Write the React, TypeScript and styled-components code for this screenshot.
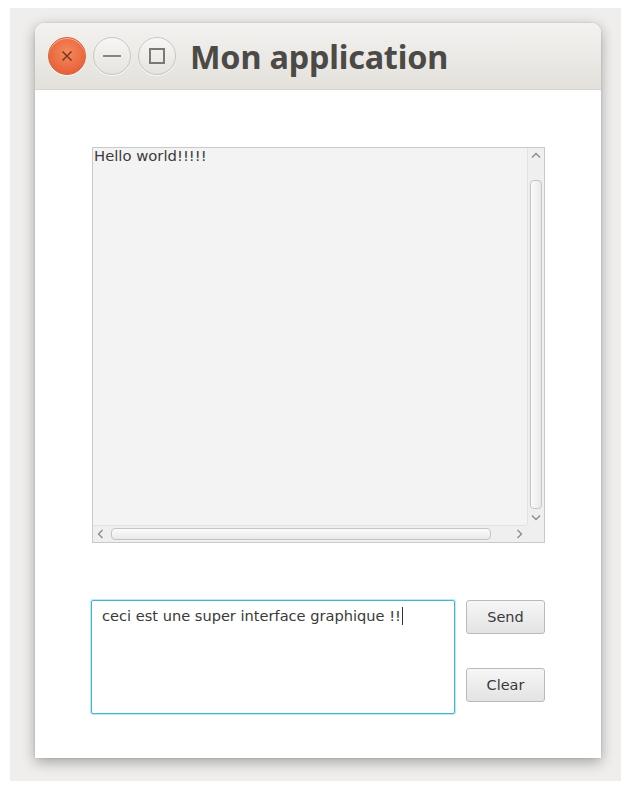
import * as React from 'react';
import styled, { createGlobalStyle } from 'styled-components';

const GlobalStyle = createGlobalStyle`
  html, body {
    margin: 0;
    padding: 0;
    background: #ffffff;
  }
  body {
    font-family: 'DejaVu Sans', 'Noto Sans', sans-serif;
  }
`;

const Desktop = styled.div`
  margin: 8px 10px 9px 10px;
  padding: 15px 20px 23px 25px;
  background: #efeeec;
`;

const Window = styled.div`
  width: 566px;
  height: 735px;
  display: flex;
  flex-direction: column;
  background: #ffffff;
  border-radius: 9px 9px 0 0;
  box-shadow: 0 4px 14px rgba(0, 0, 0, 0.32), 0 0 2px rgba(0, 0, 0, 0.15);
`;

const TitleBar = styled.header`
  height: 66px;
  display: flex;
  align-items: center;
  padding: 0 0 0 13px;
  gap: 7px;
  background: linear-gradient(#f3f2f0, #e4e1dc);
  border-bottom: 1px solid #d8d5d0;
  border-radius: 9px 9px 0 0;
`;

const WinButton = styled.div<{ $close?: boolean }>`
  width: 38px;
  height: 38px;
  border-radius: 50%;
  box-sizing: border-box;
  display: flex;
  align-items: center;
  justify-content: center;
  border: 1px solid ${(p) => (p.$close ? '#d9613a' : '#c9c6c1')};
  background: ${(p) =>
    p.$close
      ? 'radial-gradient(circle at 50% 40%, #f58a5e, #e8643a 70%, #dc5a31)'
      : 'linear-gradient(#f7f6f4, #e6e3df)'};
  box-shadow: 0 1px 1px rgba(255, 255, 255, 0.8), inset 0 1px 0 rgba(255, 255, 255, 0.5);
`;

const Title = styled.h1`
  margin: 0 0 0 7px;
  font-family: 'Noto Sans', 'Open Sans', sans-serif;
  font-weight: 700;
  font-size: 32.4px;
  color: #4b4a46;
  letter-spacing: -0.2px;
`;

const Body = styled.main`
  flex: 1;
  display: flex;
  flex-direction: column;
  justify-content: space-between;
  padding: 57px 56px 45px 57px;
`;

const Output = styled.div`
  width: 453px;
  height: 396px;
  box-sizing: border-box;
  border: 1px solid #c9c9c9;
  background: #f3f3f3;
  display: grid;
  grid-template-columns: 1fr 17px;
  grid-template-rows: 1fr 17px;
`;

const OutputText = styled.div`
  padding: 0 0 0 1px;
  font-size: 14.8px;
  line-height: 16px;
  color: #3a3a3a;
`;

const VTrack = styled.div`
  display: flex;
  flex-direction: column;
  align-items: center;
  border-left: 1px solid #e2e2e2;
  background: #efefef;
`;

const HTrack = styled.div`
  display: flex;
  align-items: center;
  border-top: 1px solid #e2e2e2;
  background: #efefef;
`;

const Corner = styled.div`
  background: #efefef;
`;

const Arrow = styled.div`
  width: 16px;
  height: 16px;
  display: flex;
  align-items: center;
  justify-content: center;
  flex-shrink: 0;
`;

const VThumb = styled.div`
  width: 12px;
  flex: 1;
  margin: 16px 0 0;
  box-sizing: border-box;
  border: 1px solid #c4c4c4;
  border-radius: 4px;
  background: linear-gradient(90deg, #fbfbfb, #e9e9e9);
`;

const HThumb = styled.div`
  height: 12px;
  width: 380px;
  margin-left: 2px;
  box-sizing: border-box;
  border: 1px solid #c4c4c4;
  border-radius: 4px;
  background: linear-gradient(#fbfbfb, #e9e9e9);
`;

const Spacer = styled.div`
  flex: 1;
`;

const Composer = styled.div`
  display: flex;
  gap: 11px;
  margin-left: -1px;
  margin-bottom: -1px;
`;

const Input = styled.div`
  width: 364px;
  height: 114px;
  box-sizing: border-box;
  border: 1px solid #3fb6d9;
  border-radius: 2px;
  box-shadow: 0 0 0 1px rgba(120, 205, 230, 0.45);
  padding: 6px 10px;
  font-size: 14.6px;
  line-height: 18px;
  color: #3a3a3a;
`;

const Caret = styled.span`
  display: inline-block;
  width: 1px;
  height: 18px;
  margin-left: 1px;
  vertical-align: -4px;
  background: #333;
`;

const Buttons = styled.div`
  display: flex;
  flex-direction: column;
  gap: 34px;
`;

const Button = styled.button`
  width: 79px;
  height: 34px;
  box-sizing: border-box;
  border: 1px solid #bababa;
  border-radius: 3px;
  background: linear-gradient(#f6f6f6, #e3e3e3);
  font-family: 'DejaVu Sans', sans-serif;
  font-size: 14.5px;
  color: #3a3a3a;
  padding: 0;
`;

const Chevron: React.FC<{ dir: 'up' | 'down' | 'left' | 'right' }> = ({ dir }) => {
  const d = {
    up: 'M4 9.5 L8 5.5 L12 9.5',
    down: 'M4 6.5 L8 10.5 L12 6.5',
    left: 'M9.5 4 L5.5 8 L9.5 12',
    right: 'M6.5 4 L10.5 8 L6.5 12',
  }[dir];
  return (
    <svg width="16" height="16" viewBox="0 0 16 16">
      <path d={d} fill="none" stroke="#8a8a8a" strokeWidth="1.3" />
    </svg>
  );
};

const App: React.FC = () => {
  return (
    <>
      <GlobalStyle />
      <Desktop>
        <Window>
          <TitleBar>
            <WinButton $close>
              <svg width="16" height="16" viewBox="0 0 16 16">
                <path d="M3.5 3.5 L12.5 12.5 M12.5 3.5 L3.5 12.5" stroke="#7a3620" strokeWidth="1.5" />
              </svg>
            </WinButton>
            <WinButton>
              <svg width="18" height="4" viewBox="0 0 18 4">
                <path d="M0 2 L18 2" stroke="#7b7975" strokeWidth="1.8" />
              </svg>
            </WinButton>
            <WinButton>
              <svg width="16" height="16" viewBox="0 0 16 16">
                <rect x="1" y="1" width="14" height="14" fill="none" stroke="#7b7975" strokeWidth="2" />
              </svg>
            </WinButton>
            <Title>Mon application</Title>
          </TitleBar>
          <Body>
            <Output>
              <OutputText>Hello world!!!!!</OutputText>
              <VTrack>
                <Arrow>
                  <Chevron dir="up" />
                </Arrow>
                <VThumb />
                <Arrow>
                  <Chevron dir="down" />
                </Arrow>
              </VTrack>
              <HTrack>
                <Arrow>
                  <Chevron dir="left" />
                </Arrow>
                <HThumb />
                <Spacer />
                <Arrow>
                  <Chevron dir="right" />
                </Arrow>
              </HTrack>
              <Corner />
            </Output>
            <Composer>
              <Input>
                ceci est une super interface graphique !!
                <Caret />
              </Input>
              <Buttons>
                <Button>Send</Button>
                <Button>Clear</Button>
              </Buttons>
            </Composer>
          </Body>
        </Window>
      </Desktop>
    </>
  );
};

export default App;
